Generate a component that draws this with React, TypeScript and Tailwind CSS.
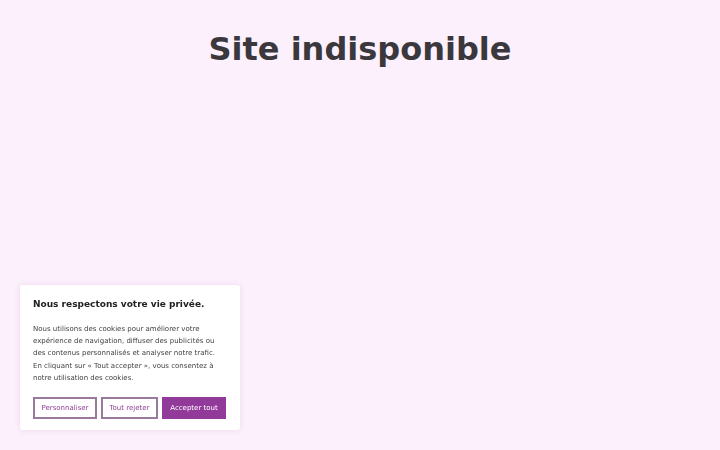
import React from 'react';

const FONT = { fontFamily: '"DejaVu Sans", Verdana, sans-serif' };

const BODY_LINES = [
  'Nous utilisons des cookies pour améliorer votre',
  'expérience de navigation, diffuser des publicités ou',
  'des contenus personnalisés et analyser notre trafic.',
  'En cliquant sur « Tout accepter », vous consentez à',
  'notre utilisation des cookies.',
];

function ConsentBanner() {
  return (
    <div className="fixed left-[20px] bottom-[20px] w-[220px] bg-white rounded-[3px] shadow-[0_0_6px_rgba(120,60,120,0.12)] px-[13px] pt-[13px] pb-[11px]">
      <p className="text-[9px] leading-[12px] font-bold text-[#212121]">Nous respectons votre vie privée.</p>
      <p className="mt-[13px] text-[7px] leading-[12.25px] text-[#3e3e3e] whitespace-nowrap">
        {BODY_LINES.map((line, i) => (
          <React.Fragment key={i}>
            {line}
            {i < BODY_LINES.length - 1 && <br />}
          </React.Fragment>
        ))}
      </p>
      <div className="mt-[13px] flex gap-[4px]">
        <button className="w-[64px] h-[22px] border-2 border-[#9a7a9c] text-[#8e3f93] text-[7px] bg-white">
          Personnaliser
        </button>
        <button className="w-[57px] h-[22px] border-2 border-[#9a7a9c] text-[#8e3f93] text-[7px] bg-white">
          Tout rejeter
        </button>
        <button className="w-[64px] h-[22px] border-2 border-[#923a99] bg-[#923a99] text-white text-[7px]">
          Accepter tout
        </button>
      </div>
    </div>
  );
}

export default function App() {
  return (
    <div className="min-h-[450px] w-full bg-[#fcf0fc]" style={FONT}>
      <h1 className="pt-[25px] text-center text-[32px] leading-[48px] font-bold text-[#3a383c]">
        Site indisponible
      </h1>
      <ConsentBanner />
    </div>
  );
}
